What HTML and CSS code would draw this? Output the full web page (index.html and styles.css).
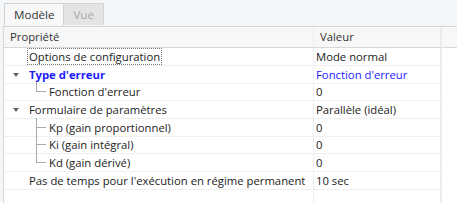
FILE: index.html
```
<!DOCTYPE html>
<html lang="fr">
<head>
	<meta charset="UTF-8">
	<title>Propriétés</title>
	<link rel="stylesheet" href="styles.css">
</head>
<body>
	<div class="tabs">
		<div class="tab active">Modèle</div>
		<div class="tab off">Vue</div>
	</div>
	<div class="grid">
		<div class="row head">
			<div class="c1">Propriété</div>
			<div class="c2">Valeur</div>
			<div class="c3"></div>
		</div>
		<div class="row">
			<div class="c1 lv0"><span class="focus">Options de configuration</span></div>
			<div class="c2">Mode normal</div>
			<div class="c3"></div>
		</div>
		<div class="row">
			<div class="c1 lv0"><i class="arrow"></i><b class="blue">Type d'erreur</b></div>
			<div class="c2 blue">Fonction d'erreur</div>
			<div class="c3"></div>
		</div>
		<div class="row">
			<div class="c1 lv1"><i class="tree last"></i>Fonction d'erreur</div>
			<div class="c2">0</div>
			<div class="c3"></div>
		</div>
		<div class="row">
			<div class="c1 lv0"><i class="arrow"></i>Formulaire de paramètres</div>
			<div class="c2">Parallèle (idéal)</div>
			<div class="c3"></div>
		</div>
		<div class="row">
			<div class="c1 lv1"><i class="tree"></i>Kp (gain proportionnel)</div>
			<div class="c2">0</div>
			<div class="c3"></div>
		</div>
		<div class="row">
			<div class="c1 lv1"><i class="tree"></i>Ki (gain intégral)</div>
			<div class="c2">0</div>
			<div class="c3"></div>
		</div>
		<div class="row">
			<div class="c1 lv1"><i class="tree last"></i>Kd (gain dérivé)</div>
			<div class="c2">0</div>
			<div class="c3"></div>
		</div>
		<div class="row">
			<div class="c1 lv0">Pas de temps pour l'exécution en régime permanent</div>
			<div class="c2">10 sec</div>
			<div class="c3"></div>
		</div>
		<div class="row empty">
			<div class="c1"></div>
			<div class="c2"></div>
			<div class="c3"></div>
		</div>
	</div>
</body>
</html>
```

FILE: styles.css
```
html,body{
	margin:0;
	padding:0;
	height:100%;
}
body{
	background:#f3f7f9;
	font-family:"Open Sans","Noto Sans",sans-serif;
	font-size:11.3px;
	color:#222;
	overflow:hidden;
}
.tabs{
	display:flex;
	height:23px;
	padding:3px 0 0 4px;
}
.tab{
	height:22px;
	line-height:21px;
	padding:0 9px;
	border:1px solid #d2d2d2;
	border-bottom:none;
	box-sizing:border-box;
	font-size:11.6px;
}
.tab.active{
	background:#f8f8f8;
	color:#333;
}
.tab.off{
	background:#e4e4e4;
	color:#a9a9a9;
	border-left:none;
}
.grid{
	margin-left:3px;
	background:#fff;
	border-left:1px solid #d6d6d6;
	border-top:1px solid #d6d6d6;
	height:180px;
}
.row{
	display:grid;
	grid-template-columns:310px 128px 1fr;
	height:17.7px;
	line-height:17px;
}
.row > div{
	border-bottom:1px solid #efefef;
	box-sizing:border-box;
	white-space:nowrap;
	position:relative;
}
.row .c1{
	border-right:1px solid #efefef;
}
.row .c2{
	border-right:2px solid #ececec;
	padding-left:2px;
}
.row .c3{
	border-bottom:none;
}
.head{
	height:21px;
	line-height:20px;
	background:#f7f7f7;
	color:#333;
}
.head > div{
	border-bottom:1px solid #d8d8d8;
}
.head .c1{
	padding-left:6px;
}
.head .c2{
	padding-left:6px;
}
.head .c3{
	border-bottom:1px solid #d8d8d8;
}
.empty > div{
	border-bottom:none;
}
.lv0{
	padding-left:25px;
}
.lv1{
	padding-left:45px;
}
.focus{
	border:1px dotted #777;
	padding:0 1px;
	margin-left:-2px;
}
.blue{
	color:#1a1aff;
}
b.blue{
	font-weight:bold;
}
.arrow{
	position:absolute;
	left:9px;
	top:7px;
	width:0;
	height:0;
	border-left:3px solid transparent;
	border-right:3px solid transparent;
	border-top:4px solid #666;
}
.tree{
	position:absolute;
	left:32px;
	top:-1px;
	bottom:-1px;
	width:9px;
	border-left:1px solid #aaa;
}
.tree.last{
	bottom:auto;
	height:10px;
}
.tree:after{
	content:"";
	position:absolute;
	left:0;
	top:9px;
	width:9px;
	border-top:1px solid #aaa;
}
```
